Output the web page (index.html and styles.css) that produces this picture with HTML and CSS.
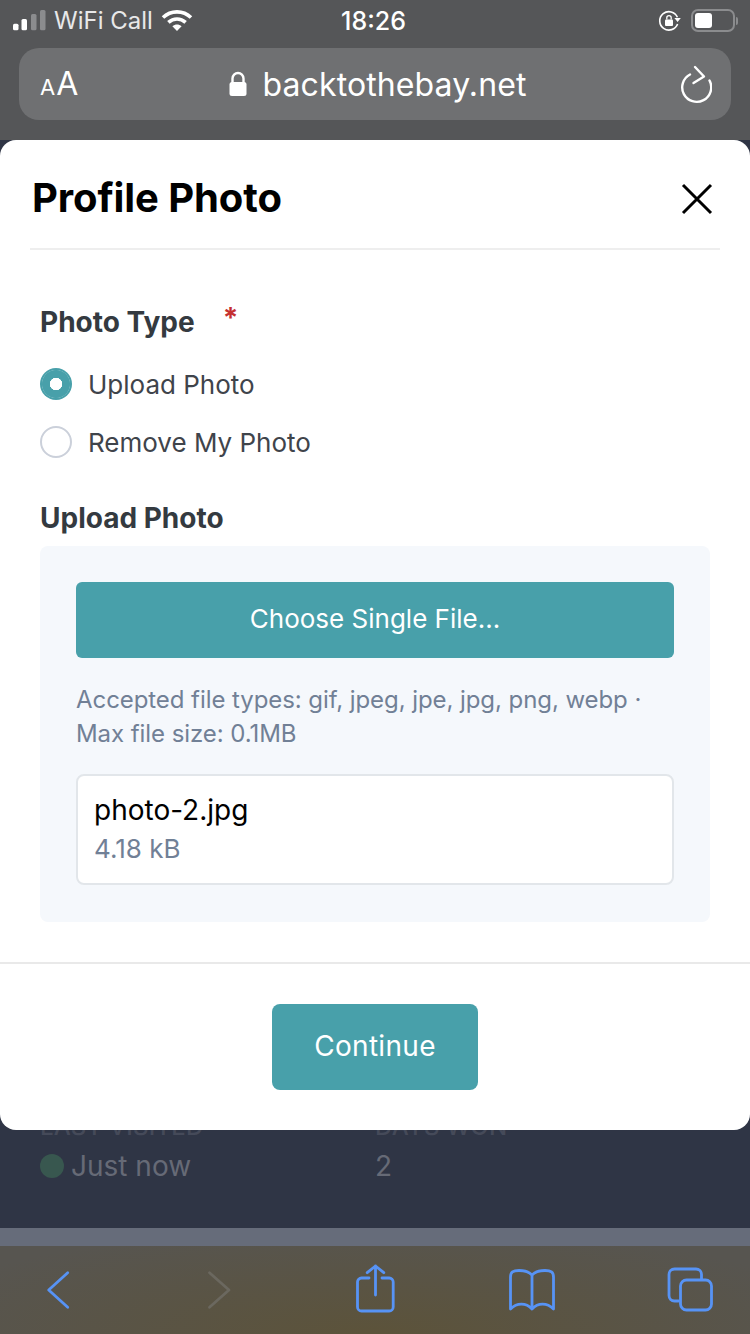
FILE: index.html
```html
<!DOCTYPE html>
<html lang="en">
<head>
<meta charset="utf-8">
<title>Profile Photo</title>
<link rel="stylesheet" href="styles.css">
</head>
<body>
<div class="page">
  <header class="chrome">
    <div class="status">
      <div class="status-left">
        <svg width="33" height="24" viewBox="0 0 33 24"><rect x="0" y="14.700" width="5.500" height="6.600" rx="1.500" fill="#fff"/><rect x="8.500" y="10" width="5.500" height="11.300" rx="1.500" fill="#fff"/><rect x="18" y="5" width="5.500" height="16.300" rx="1.500" fill="#8b8c8e"/><rect x="27" y="1" width="5.500" height="20.300" rx="1.500" fill="#8b8c8e"/></svg>
        <span class="carrier">WiFi Call</span>
        <svg width="32" height="24" viewBox="0 0 32 24"><path d="M2 8.500C9.800 1 22.200 1 30 8.500" fill="none" stroke="#fff" stroke-width="3.600"/><path d="M7.400 13.400c5-4.600 12.200-4.600 17.200 0" fill="none" stroke="#fff" stroke-width="3.600"/><path d="M11.400 17.200c2.900-2.200 6.300-2.200 9.200 0L16 22z" fill="#fff"/></svg>
      </div>
      <span class="clock">18:26</span>
      <div class="status-right">
        <svg width="24" height="24" viewBox="0 0 24 24"><path d="M19.400 8.200A9.200 9.200 0 1 0 19.600 15" fill="none" stroke="#fff" stroke-width="1.600"/><path d="M16.400 9h6.400l-3.200 4z" fill="#fff"/><rect x="7" y="10.500" width="8" height="6.500" rx="1" fill="#fff"/><path d="M8.800 10.500V8.800a2.200 2.200 0 0 1 4.400 0v1.700" fill="none" stroke="#fff" stroke-width="1.300"/></svg>
        <div class="battery"><div class="battery-fill"></div></div>
        <div class="battery-cap"></div>
      </div>
    </div>
    <div class="urlbar">
      <span class="aa"><span class="aa-small">A</span>A</span>
      <div class="address">
        <svg width="20" height="28" viewBox="0 0 20 28"><path d="M4.500 13V8.500a5.500 5.500 0 0 1 11 0V13" fill="none" stroke="#fff" stroke-width="2.400"/><rect x="1.500" y="12" width="17" height="14" rx="2.500" fill="#fff"/></svg>
        <span>backtothebay.net</span>
      </div>
      <svg class="reload" width="32" height="40" viewBox="0 0 32 40"><path d="M10 10.500A14.500 14.500 0 1 0 29.500 16.500" fill="none" stroke="#fff" stroke-width="2.400" stroke-linecap="round"/><path d="M15 3L24 12.500 13.500 19" fill="none" stroke="#fff" stroke-width="2.400" stroke-linecap="round" stroke-linejoin="round"/></svg>
    </div>
  </header>

  <main class="content">
    <div class="stats">
      <div class="stat">
        <div class="stat-label">LAST VISITED</div>
        <div class="stat-value"><span class="dot"></span>Just now</div>
      </div>
      <div class="stat">
        <div class="stat-label">DAYS WON</div>
        <div class="stat-value">2</div>
      </div>
    </div>

    <section class="modal">
      <div class="modal-head">
        <h1>Profile Photo</h1>
        <svg class="close" width="32" height="32" viewBox="0 0 32 32"><path d="M2 2L30 30M30 2L2 30" stroke="#000" stroke-width="3" fill="none"/></svg>
      </div>
      <div class="modal-body">
        <div class="label">Photo Type<span class="req">*</span></div>
        <div class="radios">
          <div class="radio-row"><span class="radio on"></span>Upload Photo</div>
          <div class="radio-row"><span class="radio"></span>Remove My Photo</div>
        </div>
        <div class="label upload-label">Upload Photo</div>
        <div class="upload">
          <div class="choose">Choose Single File...</div>
          <p class="hint">Accepted file types: gif, jpeg, jpe, jpg, png, webp · Max file size: 0.1MB</p>
          <div class="file">
            <div class="file-name">photo-2.jpg</div>
            <div class="file-size">4.18 kB</div>
          </div>
        </div>
      </div>
      <div class="modal-foot">
        <div class="continue">Continue</div>
      </div>
    </section>
  </main>

  <div class="band"></div>

  <nav class="toolbar">
    <svg class="tool" viewBox="0 0 48 52"><path d="M32.700 8.700L13.700 26 32.700 43.300" class="tool-line"/></svg>
    <svg class="tool" viewBox="0 0 48 52"><path d="M16.500 8.700L36 26 16.500 43.300" class="tool-line off"/></svg>
    <svg class="tool" viewBox="0 0 48 52"><path d="M18 14H10.500a4 4 0 0 0-4 4V43a4 4 0 0 0 4 4H38.200a4 4 0 0 0 4-4V18a4 4 0 0 0-4-4H31M24.500 31V2M16.200 8.700L24.500 2 32.800 8.700" class="tool-line"/></svg>
    <svg class="tool" viewBox="0 0 48 52"><path d="M24 11C21 7.500 16 6.500 11 6.500 5 6.500 2.500 8 2.500 13V45C9 38.500 18 38.500 24 45 30 38.500 39 38.500 45.500 45V13C45.500 8 43 6.500 37 6.500 32 6.500 27 7.500 24 11ZM24 11V45" class="tool-line"/></svg>
    <svg class="tool" viewBox="0 0 48 52"><path d="M12.500 37H8.500A5.500 5.500 0 0 1 3 31.500V10.500A5.500 5.500 0 0 1 8.500 5H30A5.500 5.500 0 0 1 35.500 10.500V15" class="tool-line"/><rect x="14.500" y="16" width="31" height="30" rx="6" class="tool-line"/></svg>
  </nav>
</div>
</body>
</html>
```
FILE: styles.css
```css
* { box-sizing: border-box; }
html, body { margin: 0; padding: 0; }
body { font-family: Inter, "Liberation Sans", sans-serif; background: #2f3545; }
.page { width: 750px; height: 1334px; display: flex; flex-direction: column; overflow: hidden; }

.chrome { height: 140px; background: #555658; color: #fff; display: flex; flex-direction: column; }
.status { height: 48px; padding: 0 12px 7px 13px; display: flex; align-items: center; justify-content: space-between; }
.status-left { display: flex; align-items: center; gap: 8px; width: 300px; }
.carrier { font-size: 24px; color: #e8e8e9; }
.clock { font-size: 25px; font-weight: 500; }
.status-right { width: 304px; display: flex; align-items: center; justify-content: flex-end; gap: 7px; }
.battery { width: 44px; height: 23px; border: 2px solid #8b8c8e; border-radius: 7px; padding: 2px; margin-left: 2px; }
.battery-fill { width: 17px; height: 15px; background: #fff; border-radius: 3px; }
.battery-cap { width: 2px; height: 8px; background: #8b8c8e; margin-left: -6px; border-radius: 0 2px 2px 0; }

.urlbar { margin: 0 19px; height: 72px; border-radius: 20px; background: #6f7072; display: flex; align-items: center; justify-content: space-between; padding: 0 19px 0 21px; }
.aa { font-size: 32px; line-height: 1; color: #fff; width: 60px; }
.aa-small { font-size: 22px; margin-right: 1px; }
.address { display: flex; align-items: center; gap: 15px; font-size: 32px; letter-spacing: .1px; color: #fff; }
.reload { margin-left: 26px; margin-bottom: 1px; }

.content { flex: 1; position: relative; padding: 971px 40px 0; background: #2f3545; }
.stats { display: flex; }
.stat { width: 335px; }
.stat-label { font-size: 24px; line-height: 32px; color: #454a59; font-weight: 500; letter-spacing: .2px; }
.stat-value { font-size: 28px; line-height: 46px; color: #666a76; display: flex; align-items: center; gap: 7px; }
.dot { width: 24px; height: 24px; border-radius: 50%; background: #38574f; }

.modal { position: absolute; left: 0; top: 0; width: 750px; height: 990px; background: #fff; border-radius: 16px; display: flex; flex-direction: column; }
.modal-head { margin: 0 30px; height: 110px; border-bottom: 2px solid #eeeeee; padding: 8px 7px 0 2px; display: flex; align-items: center; justify-content: space-between; }
.modal-head h1 { margin: 0 0 2px; font-size: 40px; font-weight: 700; color: #000; letter-spacing: -.1px; }
.close { margin-top: 2px; }
.modal-body { flex: 1; padding: 54px 40px 0; }
.label { font-size: 28px; line-height: 36px; font-weight: 700; color: #343a40; }
.req { color: #c53030; margin-left: 28px; position: relative; top: -4px; }
.radios { margin-top: 15px; }
.radio-row { height: 58px; display: flex; align-items: center; gap: 16px; font-size: 26px; color: #3f444b; }
.radio { width: 32px; height: 32px; border-radius: 50%; border: 2px solid #cbd0da; background: #fff; }
.radio.on { border: 0; background: radial-gradient(circle, #fff 0 6px, #48a0aa 6.500px 13.500px, #6db4bc 14px, #48a0aa 14.500px); }
.upload-label { margin-top: 29px; }
.upload { margin-top: 10px; height: 376px; padding: 36px; background: #f5f8fc; border-radius: 8px; }
.choose { height: 76px; padding-bottom: 4px; border-radius: 6px; background: #48a0aa; color: #fff; font-size: 26px; display: flex; align-items: center; justify-content: center; }
.hint { margin: 25px 0 0; font-size: 24px; line-height: 34px; letter-spacing: -.07px; color: #718096; }
.file { margin-top: 23px; height: 111px; background: #fff; border: 2px solid #e2e6ea; border-radius: 8px; padding: 14px 16px 0; }
.file-name { font-size: 28px; line-height: 40px; color: #000; }
.file-size { margin-top: 1px; font-size: 26px; line-height: 36px; color: #718096; }
.modal-foot { height: 168px; border-top: 2px solid #e9e9e9; display: flex; justify-content: center; padding-top: 40px; }
.continue { width: 206px; height: 86px; padding-bottom: 2px; border-radius: 8px; background: #48a0aa; color: #fff; font-size: 28px; letter-spacing: .3px; display: flex; align-items: center; justify-content: center; }

.band { height: 18px; background: #666c7a; flex: none; }
.toolbar { height: 88px; flex: none; background: radial-gradient(ellipse 480px 110px at 50% 100%, #5c533a, #575550); display: flex; align-items: center; justify-content: space-between; padding: 0 36px 0 35px; }
.tool { width: 48px; height: 52px; }
.tool-line { fill: none; stroke: #5793f5; stroke-width: 2.800; stroke-linecap: round; stroke-linejoin: round; }
.tool-line.off { stroke: #6b685f; }
```
